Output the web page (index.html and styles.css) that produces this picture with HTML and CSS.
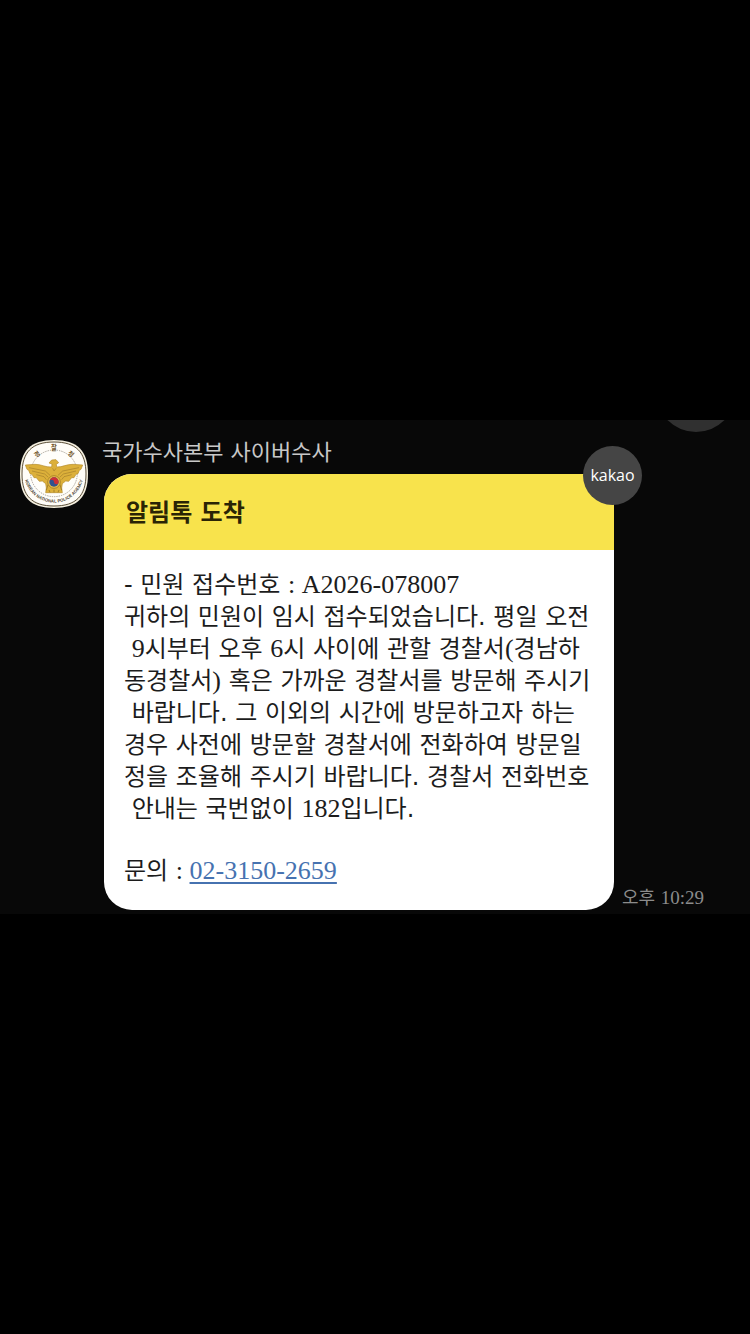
FILE: index.html
```html
<!doctype html>
<html lang="ko">
<head>
	<meta charset="UTF-8"/>
	<meta name="viewport" content="width=device-width, initial-scale=1"/>
	<title>알림톡</title>
	<link rel="stylesheet" href="styles.css">
</head>
<body>
	<main class="chat">
		<span class="scrollBt"></span>
		<div class="msg">
			<svg class="profile" viewBox="30 30 204 204" aria-hidden="true">
				<path d="M132 30C202 30 234 62 234 132S202 234 132 234 30 202 30 132 62 30 132 30Z" fill="#f4efdf"/>
				<path d="M132 36C198 36 228 66 228 132S198 228 132 228 36 198 36 132 66 36 132 36Z" fill="#fffdf8" stroke="#5c503a" stroke-width="3"/>
				<circle cx="132" cy="130" r="70" fill="#fffefa" stroke="#81796b" stroke-width="2" stroke-dasharray="4 3"/>
				<path id="ring" d="M45 110A89 89 0 1 0 219 110" fill="none"/>
				<text class="ringTxt"><textPath href="#ring" startOffset="50%" text-anchor="middle">KOREAN NATIONAL POLICE AGENCY</textPath></text>
				<g class="ringKo" text-anchor="middle">
					<text x="82" y="79" transform="rotate(-38 82 73)">경</text>
					<text x="132" y="60">찰</text>
					<text x="182" y="79" transform="rotate(38 182 73)">청</text>
				</g>
				<!-- eagle -->
				<path d="M117 99L125 90 138 89 146 98 139 103 140 111C157 112 171 102 189 103L218 105 213 118 208 121 204 131 198 133 192 143 185 143 176 154 167 153 157 161 155 174 157 188 107 188 109 174 107 161 97 153 88 154 79 143 72 143 66 133 60 131 56 121 51 118 46 105 75 103C92 102 108 113 125 111L126 102Z" fill="#dcb03a" stroke="#b58d2c" stroke-width="2"/>
				<path d="M57 113L106 123 120 136M66 123L104 132 115 142M79 134L102 140 109 149M207 113L158 123 144 136M198 123L160 132 149 142M185 134L162 140 155 149M128 115L132 123 138 115" fill="none" stroke="#a47f2b" stroke-width="2"/>
				<path d="M114 164L109 181M150 164L155 181M117 180L120 187M132 179V187M147 180L144 187" fill="none" stroke="#8a6a20" stroke-width="2"/>
				<circle cx="132" cy="156" r="19" fill="#e5bd4b" stroke="#94701e" stroke-width="2"/>
				<circle cx="132" cy="156" r="14" fill="#31538f"/>
				<path d="M118 156A14 14 0 0 1 146 156A7 7 0 0 1 132 156A7 7 0 0 0 118 156Z" fill="#ce3034"/>
			</svg>
			<div class="con">
				<h1 class="name">국가수사본부 사이버수사</h1>
				<div class="row">
					<section class="bubble">
						<h2 class="tit">알림톡 도착</h2>
						<span class="kakao">kakao</span>
						<div class="txt">
							<p>- 민원 접수번호 <span class="num">: A2026-078007</span><br>
							귀하의 민원이 임시 접수되었습니다. 평일 오전<br>
							&nbsp;<span class="num">9</span>시부터 오후 <span class="num">6</span>시 사이에 관할 경찰서<span class="num">(</span>경남하<br>
							동경찰서<span class="num">)</span> 혹은 가까운 경찰서를 방문해 주시기<br>
							&nbsp;바랍니다. 그 이외의 시간에 방문하고자 하는<br>
							경우 사전에 방문할 경찰서에 전화하여 방문일<br>
							정을 조율해 주시기 바랍니다. 경찰서 전화번호<br>
							&nbsp;안내는 국번없이 <span class="num">182</span>입니다.</p>
							<p>문의 <span class="num">: <a href="tel:02-3150-2659">02-3150-2659</a></span></p>
						</div>
					</section>
					<time class="time" datetime="22:29">오후 <span>10:29</span></time>
				</div>
			</div>
		</div>
	</main>
</body>
</html>
```
FILE: styles.css
```css
*			{ padding:0; margin:0; box-sizing:border-box; }
body		{ min-height:100vh; display:flex; flex-direction:column; justify-content:center; background:#000; font-family:"DejaVu Sans", "Noto Sans CJK KR", sans-serif; }
.chat		{ position:relative; width:100%; padding:20px 20px 4px; background:#080808; overflow:hidden; }
.scrollBt	{ position:absolute; top:-68px; right:14px; width:80px; height:80px; border-radius:50%; background:#303030; }
.msg		{ display:flex; align-items:flex-start; gap:16px; }
.profile	{ flex:none; width:68px; height:68px; }
.ringTxt	{ font:bold 13px "Liberation Sans", sans-serif; fill:#4b4230; }
.ringKo		{ font:bold 19px "Noto Sans CJK KR", sans-serif; fill:#71552a; }
.con		{ flex:1; min-width:0; }
.name		{ height:34px; margin-left:-2px; line-height:26px; font-size:22px; font-weight:400; color:#c8c8c8; }
.row		{ display:flex; align-items:flex-end; gap:8px; }
.bubble		{ position:relative; flex:0 1 510px; border-radius:28px; background:#fff; color:#1c1c1c; }
.tit		{ padding:21px 22px 19px; line-height:36px; border-radius:28px 28px 0 0; background:#f8e34c; font-size:24px; font-weight:700; color:#2a2405; }
.kakao		{ position:absolute; top:-28px; right:-28px; width:59px; height:59px; border-radius:50%; background:#454545; line-height:58px; text-align:center; font-family:"Open Sans", sans-serif; font-size:16px; font-weight:500; color:#fff; }
.txt		{ padding:19px 16px 23px 20px; line-height:32px; font-size:24px; }
.txt p + p	{ margin-top:30px; }
.txt a		{ color:#4672b0; text-decoration:underline; text-decoration-thickness:2px; text-underline-offset:3px; }
.num		{ font-family:"Liberation Serif", serif; font-size:26px; line-height:1; }
.time		{ flex:none; line-height:24px; font-size:18px; color:#8c8c8c; white-space:nowrap; }
.time span	{ font-family:"Liberation Serif", serif; font-size:19px; }
```
